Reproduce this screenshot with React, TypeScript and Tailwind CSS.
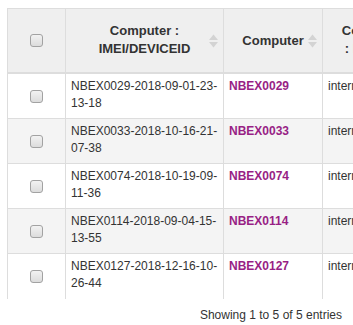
import React from "react";

type Row = {
  imei: string;
  computer: string;
  kind: string;
};

const rows: Row[] = [
  { imei: "NBEX0029-2018-09-01-23-13-18", computer: "NBEX0029", kind: "internal" },
  { imei: "NBEX0033-2018-10-16-21-07-38", computer: "NBEX0033", kind: "internal" },
  { imei: "NBEX0074-2018-10-19-09-11-36", computer: "NBEX0074", kind: "internal" },
  { imei: "NBEX0114-2018-09-04-15-13-55", computer: "NBEX0114", kind: "internal" },
  { imei: "NBEX0127-2018-12-16-10-26-44", computer: "NBEX0127", kind: "internal" },
];

function SortIcon() {
  return (
    <svg
      viewBox="0 0 9 14"
      className="absolute right-[5px] top-1/2 h-[14px] w-[9px] -translate-y-1/2"
      aria-hidden
    >
      <path d="M0 6 L4.5 0.5 L9 6 Z" fill="#d3d3d3" />
      <path d="M0 8 L4.5 13.5 L9 8 Z" fill="#d3d3d3" />
    </svg>
  );
}

function Check() {
  return (
    <input
      type="checkbox"
      aria-label="select"
      className="block h-[13px] w-[13px] appearance-none rounded-[3px] border border-[#a2a2a2] bg-gradient-to-b from-[#f2f2f2] to-[#dcdcdc]"
    />
  );
}

// wbr after every hyphen so the long ids wrap like the original
function Breakable({ text }: { text: string }) {
  const parts = text.split("-");
  return (
    <>
      {parts.map((p, i) => (
        <React.Fragment key={i}>
          {p}
          {i < parts.length - 1 && (
            <>
              -<wbr />
            </>
          )}
        </React.Fragment>
      ))}
    </>
  );
}

export default function App() {
  return (
    <div className="h-[325px] w-[353px] overflow-hidden bg-white font-['Liberation_Sans',Arial,sans-serif] text-[#333]">
      <div className="pl-[7px] pt-[8px]">
        <table className="w-[515px] table-fixed border-separate border-spacing-0">
          <thead>
            <tr className="bg-[#efefef] text-[13px] font-bold leading-[18px]">
              <th className="h-[66px] w-[58px] border-t border-b-2 border-l border-[#dddddd] p-0 align-middle">
                <div className="flex justify-center">
                  <Check />
                </div>
              </th>
              <th className="relative h-[66px] w-[158px] border-t border-b-2 border-l border-[#dddddd] px-[18px] pb-[2px] pt-0 text-center align-middle">
                Computer : IMEI/DEVICEID
                <SortIcon />
              </th>
              <th className="relative h-[66px] w-[99px] border-t border-b-2 border-l border-[#dddddd] px-[18px] py-0 text-center align-middle">
                Computer
                <SortIcon />
              </th>
              <th className="relative h-[66px] w-[100px] border-t border-b-2 border-l border-[#dddddd] px-[18px] pb-[2px] pt-0 text-center align-middle">
                Computer : Domain
                <SortIcon />
              </th>
              <th className="h-[66px] w-[100px] border-t border-b-2 border-l border-[#dddddd] px-[18px] py-0 text-center align-middle">
                Computer
              </th>
            </tr>
          </thead>
          <tbody className="text-[12px] leading-[17px]">
            {rows.map((r, i) => {
              const last = i === rows.length - 1;
              const bg = i % 2 === 1 ? "bg-[#f4f4f4]" : "bg-white";
              const cell = last
                ? "border-l border-[#dddddd]"
                : "border-l border-b border-[#dddddd]";
              return (
                <tr key={r.computer} className={bg}>
                  <td className={`${cell} h-[45px] p-0 align-middle`}>
                    <div className="flex justify-center">
                      <Check />
                    </div>
                  </td>
                  <td className={`${cell} px-[5px] pb-[6px] pt-[4px] align-top`}>
                    <Breakable text={r.imei} />
                  </td>
                  <td className={`${cell} px-[5px] pb-[6px] pt-[4px] align-top`}>
                    <a href="#" className="font-bold text-[#981f85]">
                      {r.computer}
                    </a>
                  </td>
                  <td className={`${cell} px-[5px] pb-[6px] pt-[4px] align-top`}>
                    {r.kind}
                  </td>
                  <td className={`${cell} px-[5px] pb-[6px] pt-[4px] align-top`}>
                    -
                  </td>
                </tr>
              );
            })}
          </tbody>
        </table>
      </div>
      <div className="mt-[8px] flex justify-end pr-[11px] text-[12px] leading-[17px]">
        Showing 1 to 5 of 5 entries
      </div>
    </div>
  );
}
